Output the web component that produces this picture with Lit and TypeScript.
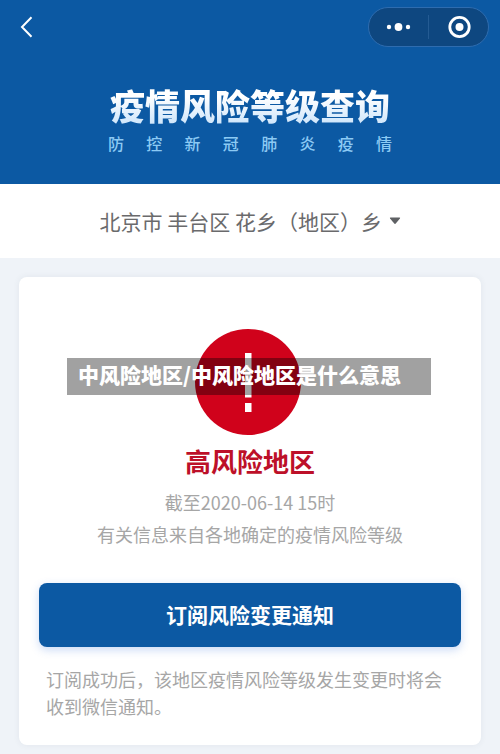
import { LitElement, html, css } from "lit";
import { customElement } from "lit/decorators.js";

@customElement("app-root")
export class AppRoot extends LitElement {
  static styles = css`
    :host {
      display: block;
      min-height: 100vh;
      box-sizing: border-box;
      padding-bottom: 9px;
      background: #eff3f8;
      font-family: "Noto Sans CJK SC", "Noto Sans", sans-serif;
      color: #a6a6a6;
    }
    button,
    select {
      font: inherit;
      color: inherit;
      border: 0;
      padding: 0;
      margin: 0;
      background: none;
      cursor: pointer;
    }
    svg {
      display: block;
    }
    .header {
      background: #0c59a3;
      height: 184px;
    }
    .nav {
      display: flex;
      justify-content: space-between;
      align-items: center;
      padding: 7px 11px 0 12px;
    }
    .back {
      padding: 4px;
    }
    .capsule {
      display: flex;
      align-items: center;
      box-sizing: border-box;
      width: 121px;
      height: 40px;
      border: 1px solid #2e6caf;
      border-radius: 20px;
      background: #0e4780;
    }
    .capsule button {
      flex: 1;
      display: flex;
      justify-content: center;
    }
    .divider {
      width: 1px;
      height: 24px;
      background: #245b93;
    }
    .brand {
      width: 284px;
      margin: 31px auto 0;
    }
    .title {
      margin: 0;
      font-size: 35px;
      line-height: 54px;
      font-weight: 900;
      text-align: center;
      white-space: nowrap;
      color: transparent;
      background: linear-gradient(#ffffff 35%, #cfe6fb 85%);
      -webkit-background-clip: text;
      background-clip: text;
    }
    .subtitle {
      margin: 0;
      font-size: 16px;
      line-height: 22px;
      font-weight: 500;
      text-align: justify;
      text-align-last: justify;
      color: #8ccaf4;
    }
    .region {
      display: flex;
      justify-content: center;
      align-items: center;
      gap: 6px;
      height: 74px;
      background: #fff;
      color: #6a6a6c;
    }
    .region select {
      appearance: none;
      font-size: 21px;
      line-height: 32px;
    }
    .card {
      margin: 19px 19px 0;
      padding: 52px 20px 24px;
      background: #fff;
      border-radius: 8px;
      box-shadow: 0 0 6px rgba(60, 80, 100, 0.08);
      text-align: center;
      font-size: 18px;
    }
    .alert {
      position: relative;
      display: flex;
      justify-content: center;
      padding-right: 4px;
    }
    .caption {
      position: absolute;
      top: 29px;
      left: 28px;
      right: 30px;
      box-sizing: border-box;
      padding: 0 11px 5px;
      background: rgba(0, 0, 0, 0.37);
      color: #fff;
      font-size: 21px;
      line-height: 32px;
      font-weight: 900;
      text-align: left;
      white-space: nowrap;
    }
    .level {
      margin: 7px 0 6px;
      font-size: 26px;
      line-height: 38px;
      font-weight: 700;
      color: #bd1029;
    }
    .info {
      margin: 0;
      line-height: 32px;
    }
    .subscribe {
      display: block;
      width: 100%;
      height: 64px;
      margin-top: 33px;
      padding-bottom: 2px;
      border-radius: 8px;
      background: #0c59a3;
      box-shadow: 0 3px 8px rgba(50, 110, 220, 0.25);
      color: #fff;
      font-size: 21px;
      font-weight: 700;
    }
    .note {
      margin: 19px 0 0;
      padding: 0 7px 1px;
      line-height: 27px;
      text-align: left;
    }
  `;

  render() {
    return html`
      <header class="header">
        <nav class="nav">
          <button class="back" aria-label="返回">
            <svg width="22" height="24" viewBox="0 0 22 24" fill="none" stroke="#fff" stroke-width="2">
              <path d="M15.5 2.2 6 12l9.5 9.8" />
            </svg>
          </button>
          <div class="capsule">
            <button aria-label="更多">
              <svg width="26" height="10" viewBox="0 0 26 10" fill="#fff">
                <circle cx="3" cy="5" r="2.2" />
                <circle cx="12.5" cy="5" r="3.9" />
                <circle cx="22" cy="5" r="2.2" />
              </svg>
            </button>
            <span class="divider"></span>
            <button aria-label="关闭">
              <svg width="24" height="24" viewBox="0 0 24 24">
                <circle cx="12.5" cy="12" r="9.7" fill="none" stroke="#fff" stroke-width="2.8" />
                <circle cx="12.5" cy="12" r="4" fill="#fff" />
              </svg>
            </button>
          </div>
        </nav>
        <div class="brand">
          <h1 class="title">疫情风险等级查询</h1>
          <p class="subtitle">防控新冠肺炎疫情</p>
        </div>
      </header>

      <div class="region">
        <select aria-label="地区">
          <option>北京市 丰台区 花乡（地区）乡</option>
        </select>
        <svg width="12" height="8" viewBox="0 0 12 8" fill="#5f6164">
          <path d="M1.5.5h9q1 0 .4.9L6.8 6.6q-.8.9-1.6 0L1.1 1.4Q.5.5 1.5.5z" />
        </svg>
      </div>

      <main class="card">
        <div class="alert">
          <svg width="106" height="106" viewBox="0 0 106 106">
            <circle cx="53" cy="53" r="53" fill="#d0021b" />
            <path d="M50 24h6.5v44.5H50zM50 74h6.5v9H50z" fill="#fff" />
          </svg>
          <div class="caption">中风险地区/中风险地区是什么意思</div>
        </div>
        <h2 class="level">高风险地区</h2>
        <p class="info">截至2020-06-14 15时</p>
        <p class="info">有关信息来自各地确定的疫情风险等级</p>
        <button class="subscribe">订阅风险变更通知</button>
        <p class="note">订阅成功后，该地区疫情风险等级发生变更时将会收到微信通知。</p>
      </main>
    `;
  }
}
